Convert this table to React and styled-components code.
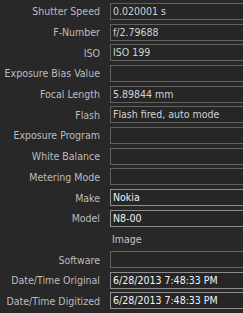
import React from 'react';
import styled, { createGlobalStyle } from 'styled-components';

const Global = createGlobalStyle`
  html, body {
    margin: 0;
    padding: 0;
    background: #282828;
    overflow: hidden;
  }
`

const Panel = styled.div`
  display: grid;
  grid-template-columns: 110px 140px;
  grid-auto-rows: 20.7px;
  align-items: center;
  padding-top: 1px;
  width: 243px;
  height: 313px;
  overflow: hidden;
  font-family: "DejaVu Sans Condensed", "DejaVu Sans", sans-serif;
  font-stretch: condensed;
  font-size: 10.5px;
`

const Label = styled.div`
  text-align: right;
  padding-right: 10px;
  color: #bdbdbd;
  white-space: nowrap;
`

const Field = styled.div`
  box-sizing: border-box;
  height: 17px;
  line-height: 15px;
  padding-left: 2px;
  border: 1px solid ${p => (p.$bright ? '#8e8e8e' : '#616161')};
  color: ${p => (p.$bright ? '#f2f2f2' : '#d2d2d2')};
  background: #262626;
  white-space: nowrap;
  overflow: hidden;
`

const Plain = styled.div`
  padding-left: 2px;
  color: #c4c4c4;
  white-space: nowrap;
`

const rows = [
  ['Shutter Speed', '0.020001 s'],
  ['F-Number', 'f/2.79688'],
  ['ISO', 'ISO 199'],
  ['Exposure Bias Value', ''],
  ['Focal Length', '5.89844 mm'],
  ['Flash', 'Flash fired, auto mode'],
  ['Exposure Program', ''],
  ['White Balance', ''],
  ['Metering Mode', ''],
  ['Make', 'Nokia', true],
  ['Model', 'N8-00', true],
  ['', 'Image', false, true],
  ['Software', ''],
  ['Date/Time Original', '6/28/2013 7:48:33 PM', true],
  ['Date/Time Digitized', '6/28/2013 7:48:33 PM', true],
]

const App = () => (
  <>
    <Global />
    <Panel>
      {rows.map(([label, value, bright, plain], i) => (
        <React.Fragment key={i}>
          <Label>{label}</Label>
          {plain ? <Plain>{value}</Plain> : <Field $bright={bright}>{value}</Field>}
        </React.Fragment>
      ))}
    </Panel>
  </>
)

export default App
